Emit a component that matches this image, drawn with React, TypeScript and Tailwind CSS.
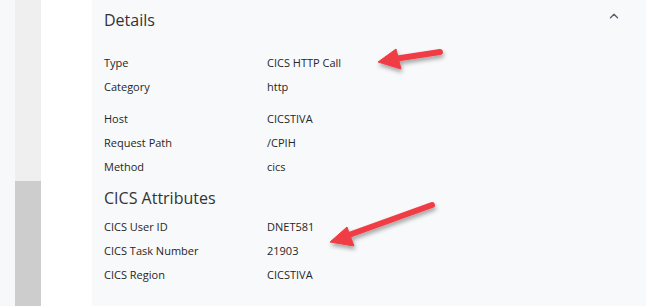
import { ChevronUp } from "lucide-react";

const font = { fontFamily: '"Open Sans", "Noto Sans", sans-serif' };

const Row = ({ label, value }: { label: string; value: string }) => (
  <div className="grid grid-cols-[163px_1fr] h-6 items-center text-[11px] text-[#262626]">
    <span>{label}</span>
    <span>{value}</span>
  </div>
);

const Arrows = () => (
  <svg className="absolute inset-0 pointer-events-none" width="654" height="306">
    <defs>
      <filter id="sh" x="-20%" y="-20%" width="140%" height="160%">
        <feDropShadow dx="1" dy="3" stdDeviation="2" floodColor="#000" floodOpacity="0.35" />
      </filter>
    </defs>
    <g filter="url(#sh)" fill="#f03e45" stroke="#f03e45">
      <line x1="440" y1="52" x2="394" y2="59" strokeWidth="6" strokeLinecap="round" />
      <polygon points="378,62 396,49 401,69" strokeWidth="1" strokeLinejoin="round" />
      <line x1="432" y1="205" x2="346" y2="236" strokeWidth="6" strokeLinecap="round" />
      <polygon points="330,242 347,227 354,246" strokeWidth="1" strokeLinejoin="round" />
    </g>
  </svg>
);

export default function App() {
  return (
    <div className="relative w-[654px] h-[306px] flex bg-white overflow-hidden" style={font}>
      <div className="w-[15px] bg-[#f7f8fa]" />
      <div className="w-[26px] bg-[#efefef] flex flex-col justify-end">
        <div className="h-[125px] bg-[#cdcdcd]" />
      </div>
      <div className="w-[51px] bg-white" />
      <div className="w-[554px] bg-[#f8f9fb] relative pl-3">
        <ChevronUp className="absolute left-[515px] top-[9px] text-[#5b6477]" size={14} strokeWidth={2.5} />
        <h2 className="mt-2 text-[16px] leading-6 text-[#333]">Details</h2>
        <div className="mt-[19px]">
          <Row label="Type" value="CICS HTTP Call" />
          <Row label="Category" value="http" />
        </div>
        <div className="mt-2">
          <Row label="Host" value="CICSTIVA" />
          <Row label="Request Path" value="/CPIH" />
          <Row label="Method" value="cics" />
        </div>
        <h3 className="mt-2 text-[16px] leading-[22px] text-[#333]">CICS Attributes</h3>
        <div className="mt-[6px]">
          <Row label="CICS User ID" value="DNET581" />
          <Row label="CICS Task Number" value="21903" />
          <Row label="CICS Region" value="CICSTIVA" />
        </div>
      </div>
      <div className="flex-1 bg-white" />
      <Arrows />
    </div>
  );
}
